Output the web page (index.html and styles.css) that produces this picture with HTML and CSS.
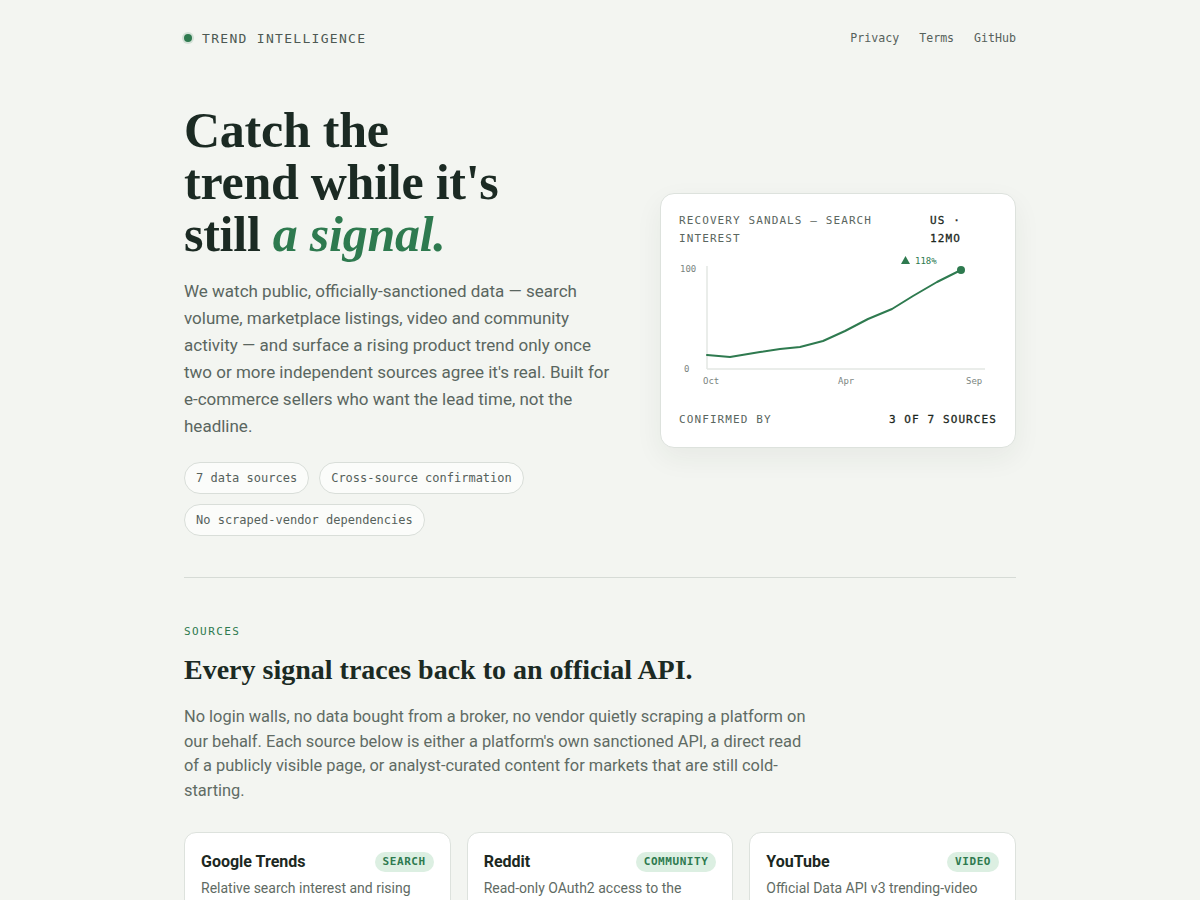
FILE: index.html
```html
<!DOCTYPE html>
<html lang="en">
<head>
<meta charset="utf-8">
<title>Trend Intelligence</title>
<link rel="stylesheet" href="styles.css">
</head>
<body>
<div class="page">
  <header class="top">
    <div class="brand"><span class="brand-dot"></span><span class="brand-name">TREND INTELLIGENCE</span></div>
    <nav class="nav">
      <a href="#">Privacy</a>
      <a href="#">Terms</a>
      <a href="#">GitHub</a>
    </nav>
  </header>

  <section class="hero">
    <div class="hero-copy">
      <h1 class="hero-title">Catch the<br>trend while it's<br>still <em>a signal.</em></h1>
      <p class="hero-text">We watch public, officially-sanctioned data — search volume, marketplace listings, video and community activity — and surface a rising product trend only once two or more independent sources agree it's real. Built for e-commerce sellers who want the lead time, not the headline.</p>
      <ul class="pills">
        <li class="pill">7 data sources</li>
        <li class="pill">Cross-source confirmation</li>
        <li class="pill">No scraped-vendor dependencies</li>
      </ul>
    </div>

    <div class="chart-card">
      <div class="chart-head">
        <span class="chart-title">RECOVERY SANDALS — SEARCH INTEREST</span>
        <span class="chart-meta">US · 12MO</span>
      </div>
      <svg class="chart" width="318" height="134" viewBox="0 0 318 134">
        <text class="axis-label" x="1" y="18">100</text>
        <text class="axis-label" x="5" y="118">0</text>
        <line class="axis" x1="28" y1="12" x2="28" y2="115"/>
        <line class="axis" x1="28" y1="115" x2="306" y2="115"/>
        <polyline class="trend-line" points="28,101 51,103 81,98 101,95 121,93 144,87 166,77 189,65 213,55 234,42 258,28 282,16"/>
        <circle class="trend-dot" cx="282" cy="16" r="4"/>
        <polygon class="trend-up" points="222,10 231,10 226.5,2"/>
        <text class="trend-pct" x="236" y="10">118%</text>
        <text class="axis-label" x="24" y="130">Oct</text>
        <text class="axis-label" x="159" y="130">Apr</text>
        <text class="axis-label" x="287" y="130">Sep</text>
      </svg>
      <div class="chart-foot">
        <span class="foot-label">CONFIRMED BY</span>
        <span class="foot-value">3 OF 7 SOURCES</span>
      </div>
    </div>
  </section>

  <hr class="divider">

  <section class="sources">
    <div class="eyebrow">SOURCES</div>
    <h2 class="section-title">Every signal traces back to an official API.</h2>
    <p class="section-text">No login walls, no data bought from a broker, no vendor quietly scraping a platform on our behalf. Each source below is either a platform's own sanctioned API, a direct read of a publicly visible page, or analyst-curated content for markets that are still cold-starting.</p>

    <div class="source-grid">
      <article class="source-card">
        <div class="source-head"><h3 class="source-name">Google Trends</h3><span class="badge">SEARCH</span></div>
        <p class="source-desc">Relative search interest and rising queries through the official Trends endpoints.</p>
      </article>
      <article class="source-card">
        <div class="source-head"><h3 class="source-name">Reddit</h3><span class="badge">COMMUNITY</span></div>
        <p class="source-desc">Read-only OAuth2 access to the public subreddit listings and comments.</p>
      </article>
      <article class="source-card">
        <div class="source-head"><h3 class="source-name">YouTube</h3><span class="badge">VIDEO</span></div>
        <p class="source-desc">Official Data API v3 trending-video charts for each region we cover.</p>
      </article>
    </div>
  </section>
</div>
</body>
</html>
```

FILE: styles.css
```css
* { box-sizing: border-box; }

html, body {
  margin: 0;
  padding: 0;
  background: #f3f5f1;
}

body {
  font-family: Roboto, "Noto Sans", "Liberation Sans", sans-serif;
  color: #1c2822;
}

.page {
  max-width: 832px;
  margin: 0 auto;
}

/* header */
.top {
  display: flex;
  justify-content: space-between;
  align-items: center;
  padding: 28px 0 0;
  height: 48px;
}

.brand {
  display: flex;
  align-items: center;
  gap: 10px;
}

.brand-dot {
  width: 8px;
  height: 8px;
  border-radius: 50%;
  background: #2e7a4f;
  box-shadow: 0 0 0 2px rgba(46, 122, 79, 0.16);
}

.brand-name {
  font-family: "DejaVu Sans Mono", "Liberation Mono", monospace;
  font-size: 13px;
  letter-spacing: 0.1em;
  color: #4d5953;
}

.nav {
  display: flex;
  gap: 20px;
}

.nav a {
  font-family: "DejaVu Sans Mono", "Liberation Mono", monospace;
  font-size: 11.6px;
  color: #56615b;
  text-decoration: none;
}

/* hero */
.hero {
  display: grid;
  grid-template-columns: 1fr 356px;
  gap: 40px;
  align-items: center;
  padding-top: 56px;
}

.hero-title {
  margin: 0;
  font-family: "Liberation Serif", "DejaVu Serif", serif;
  font-weight: 700;
  font-size: 50px;
  line-height: 52px;
  letter-spacing: -0.005em;
  color: #1b2a23;
}

.hero-title em {
  font-style: italic;
  color: #2e7a4f;
}

.hero-text {
  margin: 18px 0 0;
  font-size: 17px;
  line-height: 27px;
  color: #5a6660;
}

.pills {
  list-style: none;
  margin: 22px 0 0;
  padding: 0;
  display: flex;
  flex-wrap: wrap;
  gap: 10px;
}

.pill {
  font-family: "DejaVu Sans Mono", "Liberation Mono", monospace;
  font-size: 12px;
  line-height: 16px;
  padding: 7px 11px;
  border: 1px solid #d9ded9;
  border-radius: 999px;
  background: #fbfcfa;
  color: #56615b;
}

/* chart card */
.chart-card {
  background: #ffffff;
  border: 1px solid #dde2dd;
  border-radius: 14px;
  padding: 18px;
  box-shadow: 0 10px 28px rgba(30, 50, 40, 0.06);
}

.chart-head {
  display: grid;
  grid-template-columns: 1fr 67px;
  gap: 12px;
  font-family: "DejaVu Sans Mono", "Liberation Mono", monospace;
  font-size: 11px;
  line-height: 18px;
  letter-spacing: 0.1em;
}

.chart-title {
  color: #5a6660;
}

.chart-meta {
  color: #1c2822;
  -webkit-text-stroke: 0.3px #1c2822;
}

.chart {
  display: block;
  margin-top: 6px;
}

.axis {
  stroke: #e3e7e3;
  stroke-width: 1.5;
}

.axis-label {
  font-family: "DejaVu Sans Mono", "Liberation Mono", monospace;
  font-size: 9px;
  fill: #7b857f;
}

.trend-line {
  fill: none;
  stroke: #2e7a4f;
  stroke-width: 2;
  stroke-linejoin: round;
  stroke-linecap: round;
}

.trend-dot,
.trend-up {
  fill: #2e7a4f;
}

.trend-pct {
  font-family: "DejaVu Sans Mono", "Liberation Mono", monospace;
  font-size: 9px;
  fill: #2e7a4f;
}

.chart-foot {
  display: flex;
  justify-content: space-between;
  margin-top: 23px;
  font-family: "DejaVu Sans Mono", "Liberation Mono", monospace;
  font-size: 11px;
  line-height: 18px;
  letter-spacing: 0.1em;
}

.foot-label { color: #5a6660; }
.foot-value { color: #1c2822; -webkit-text-stroke: 0.3px #1c2822; }

/* divider */
.divider {
  margin: 41px 0 0;
  border: 0;
  border-top: 1px solid #d6dbd6;
}

/* sources */
.sources {
  padding-top: 47px;
}

.eyebrow {
  font-family: "DejaVu Sans Mono", "Liberation Mono", monospace;
  font-size: 11px;
  letter-spacing: 0.13em;
  color: #2e7a4f;
}

.section-title {
  margin: 14px 0 0;
  font-family: "Liberation Serif", "DejaVu Serif", serif;
  font-weight: 700;
  font-size: 28px;
  line-height: 36px;
  color: #1b2a23;
}

.section-text {
  margin: 17px 0 0;
  max-width: 624px;
  font-size: 16.4px;
  line-height: 24.7px;
  color: #5f6b64;
}

.source-grid {
  display: grid;
  grid-template-columns: repeat(3, 1fr);
  gap: 16px;
  margin-top: 28px;
}

.source-card {
  background: #ffffff;
  border: 1px solid #dde2dd;
  border-radius: 12px;
  padding: 17px 16px 16px;
}

.source-head {
  display: flex;
  justify-content: space-between;
  align-items: center;
}

.source-name {
  margin: 0;
  font-size: 16px;
  line-height: 24px;
  font-weight: 700;
  color: #1c2822;
}

.badge {
  font-family: "DejaVu Sans Mono", "Liberation Mono", monospace;
  font-size: 11px;
  font-weight: 700;
  letter-spacing: 0.05em;
  line-height: 14px;
  padding: 3px 8px;
  border-radius: 999px;
  background: #dcefe2;
  color: #2e7a4f;
}

.source-desc {
  margin: 3px 0 0;
  font-size: 14px;
  line-height: 22px;
  color: #5f6b64;
}
```
